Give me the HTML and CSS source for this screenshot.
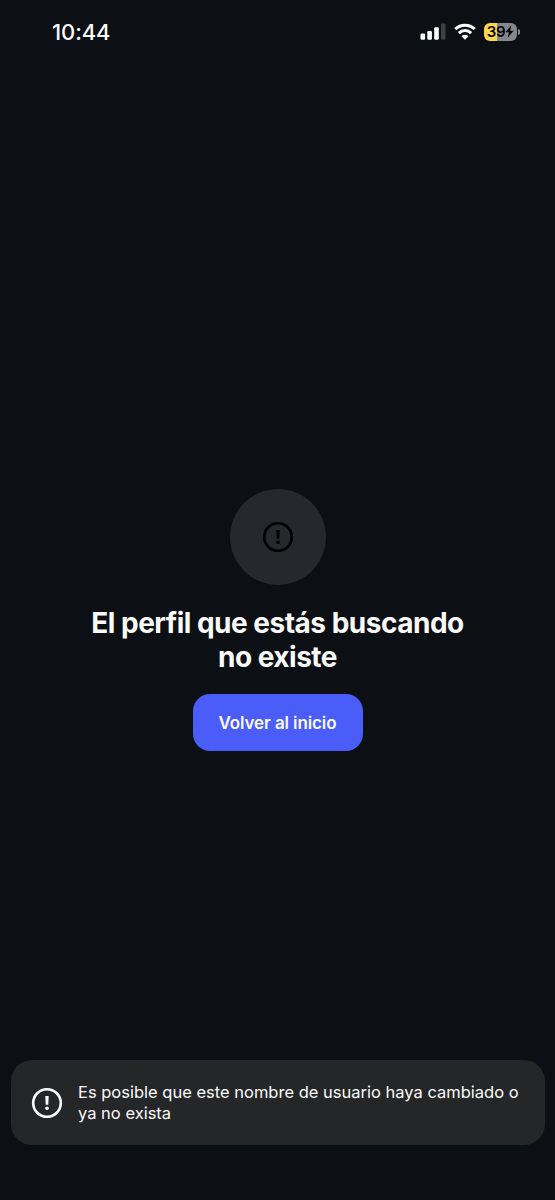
FILE: index.html
```html
<!DOCTYPE html>
<html lang="es">
<head>
  <meta charset="UTF-8" />
  <meta name="viewport" content="width=device-width, initial-scale=1.0" />
  <title>Perfil no encontrado</title>
  <link rel="stylesheet" href="styles.css">
</head>
<body>
  <header class="status-bar">
    <span class="time">10:44</span>
    <div class="status-icons">
      <svg class="signal" width="26" height="17" viewBox="0 0 26 17">
        <rect x="0.5" y="10.5" width="4.6" height="6.2" rx="1.2" fill="#fff" />
        <rect x="7.3" y="8" width="4.6" height="8.7" rx="1.2" fill="#fff" />
        <rect x="14.2" y="4.3" width="4.6" height="12.4" rx="1.2" fill="#fff" />
        <rect x="21" y="0.5" width="4.6" height="16.2" rx="1.2" fill="#3d4043" />
      </svg>
      <svg class="wifi" width="22" height="17" viewBox="0 0 22 17">
        <g fill="none" stroke="#fff" stroke-width="3.1">
          <path d="M1.3 6.2a13.8 13.8 0 0 1 19.4 0" />
          <path d="M4.9 10.1a8.6 8.6 0 0 1 12.2 0" />
        </g>
        <path d="M11 16.8l-3.5-3.6a5 5 0 0 1 7 0z" fill="#fff" />
      </svg>
      <div class="battery">
        <span class="battery-level">39</span>
        <svg class="bolt" width="9" height="13" viewBox="0 0 9 13">
          <path d="M6.3 0.3L0.4 7.3h3.5L2.7 12.7L8.6 5.7H5.1z" fill="#000" />
        </svg>
      </div>
      <span class="battery-cap"></span>
    </div>
  </header>

  <main class="empty-state">
    <div class="empty-icon">
      <svg width="32" height="32" viewBox="0 0 32 32">
        <circle cx="16" cy="16" r="13.8" fill="none" stroke="currentColor" stroke-width="2.6" />
        <path d="M14.3 9h3.4l-.4 8.8h-2.6z" fill="currentColor" />
        <circle cx="16" cy="21.3" r="1.8" fill="currentColor" />
      </svg>
    </div>
    <h1>El perfil que estás buscando<br>no existe</h1>
    <button class="home-button" type="button">Volver al inicio</button>
  </main>

  <div class="toast">
    <svg width="32" height="32" viewBox="0 0 32 32">
      <circle cx="16" cy="16" r="13.8" fill="none" stroke="currentColor" stroke-width="2.6" />
      <path d="M14.3 9h3.4l-.4 8.8h-2.6z" fill="currentColor" />
      <circle cx="16" cy="21.3" r="1.8" fill="currentColor" />
    </svg>
    <p>Es posible que este nombre de usuario haya cambiado o<br>ya no exista</p>
  </div>
</body>
</html>
```
FILE: styles.css
```css
* {
  box-sizing: border-box;
}
body {
  display: flex;
  flex-direction: column;
  height: 1200px;
  margin: 0;
  padding-bottom: 55px;
  background: #0c0f14;
  color: #fafafa;
  font-family: Inter, "Liberation Sans", sans-serif;
  overflow: hidden;
}
.status-bar {
  display: flex;
  align-items: center;
  justify-content: space-between;
  height: 63px;
  padding: 0 35px 0 52px;
}
.time {
  font-size: 22px;
  font-weight: 500;
  letter-spacing: -0.1px;
}
.status-icons {
  display: flex;
  align-items: center;
}
.wifi {
  margin: 0 8px;
}
.battery {
  display: flex;
  align-items: center;
  justify-content: center;
  width: 33px;
  height: 18px;
  border-radius: 6px;
  background: linear-gradient(to right, #fbd84b 39%, #86878b 39%);
  color: #000;
}
.battery-level {
  font-size: 15px;
  font-weight: 600;
  line-height: 18px;
  letter-spacing: -0.2px;
}
.battery-cap {
  width: 2px;
  height: 6px;
  margin-left: 1px;
  border-radius: 0 3px 3px 0;
  background: #86878b;
}
.empty-state {
  display: flex;
  flex: 1;
  flex-direction: column;
  align-items: center;
  padding-top: 425.5px;
}
.empty-icon {
  display: flex;
  align-items: center;
  justify-content: center;
  width: 96px;
  height: 96px;
  border-radius: 50%;
  background: #25282c;
  color: #000;
}
h1 {
  margin: 21.5px 0 20px;
  font-size: 28px;
  font-weight: 700;
  line-height: 34px;
  letter-spacing: -0.5px;
  text-align: center;
  white-space: nowrap;
}
.home-button {
  width: 170px;
  height: 57px;
  padding: 0;
  border: none;
  border-radius: 17px;
  background: #4a5df9;
  color: #fafafa;
  font-family: inherit;
  font-size: 17px;
  font-weight: 600;
  letter-spacing: -0.1px;
  white-space: nowrap;
}
.toast {
  display: flex;
  align-items: center;
  gap: 15px;
  height: 85px;
  margin: 0 10px 0 11px;
  padding-left: 20px;
  border-radius: 21px;
  background: #252628;
}
.toast p {
  margin: 0;
  font-size: 16.5px;
  line-height: 21px;
  white-space: nowrap;
}
```
